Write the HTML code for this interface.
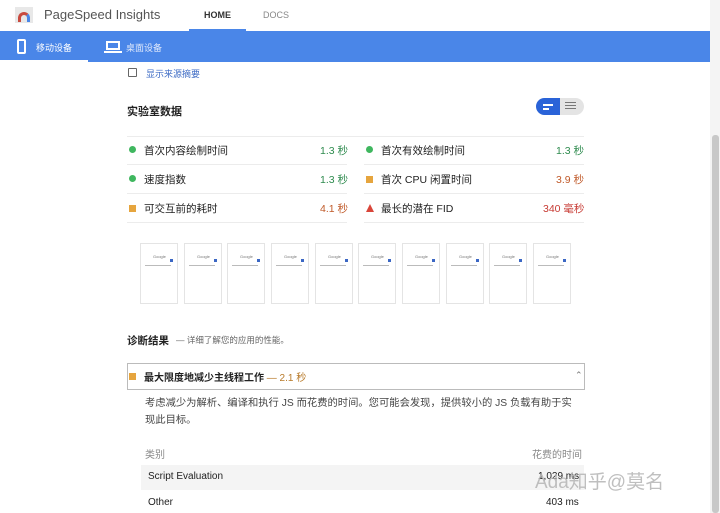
<!DOCTYPE html><html><head><meta charset="utf-8"><style>
*{margin:0;padding:0;box-sizing:border-box}
body{width:720px;height:513px;overflow:hidden;background:#fff;font-family:"Liberation Sans","Noto Sans CJK SC",sans-serif;position:relative;color:#212121}
.a{position:absolute;white-space:nowrap}
.sep{position:absolute;height:1px;background:#ececec}
.fr{position:absolute;top:243px;width:38px;height:61px;border:1px solid #e4e4e4;background:#fff}
.fr i{position:absolute;font-style:normal;font-size:4px;color:#777;left:12px;top:10px}
.fr b{position:absolute;left:4px;top:21px;width:26px;height:1px;background:#bbb}
.fr s{position:absolute;right:4px;top:15px;width:3px;height:3px;background:#3b67c4}
</style></head><body>
<div class="a" style="left:15px;top:7px;width:18px;height:16px;background:#e8e8e8"></div>
<div class="a" style="left:18px;top:12px;width:12px;height:10px;border:3px solid #c94a3f;border-bottom:none;border-radius:7px 7px 0 0;border-right-color:#4a86e8"></div>
<div class="a" style="left:44px;top:7px;font-size:13px;color:#555">PageSpeed Insights</div>
<div class="a" style="left:204px;top:10px;font-size:9px;font-weight:bold;color:#333">HOME</div>
<div class="a" style="left:263px;top:10px;font-size:9px;color:#888">DOCS</div>
<div class="a" style="left:189px;top:29px;width:57px;height:2px;background:#4a86e8"></div>
<div class="a" style="left:0;top:31px;width:710px;height:31px;background:#4a86e8"></div>
<div class="a" style="left:0;top:60px;width:88px;height:2px;background:#fff"></div>
<div class="a" style="left:17px;top:39px;width:9px;height:15px;border:2px solid #fff;border-radius:2px"></div>
<div class="a" style="left:36px;top:41px;font-size:9px;color:#fff">移动设备</div>
<div class="a" style="left:106px;top:41px;width:14px;height:9px;border:2px solid #fff"></div>
<div class="a" style="left:104px;top:51px;width:18px;height:2px;background:#fff"></div>
<div class="a" style="left:126px;top:41px;font-size:9px;color:#dfe8fb">桌面设备</div>
<div class="a" style="left:128px;top:68px;width:9px;height:9px;border:1.5px solid #666;border-radius:1px"></div>
<div class="a" style="left:146px;top:67px;font-size:9px;color:#3d6bc4">显示来源摘要</div>
<div class="a" style="left:127px;top:103px;font-size:11px;font-weight:bold">实验室数据</div>
<div class="a" style="left:536px;top:98px;width:48px;height:17px;border-radius:9px;background:#e4e4e4;overflow:hidden"><div style="width:24px;height:17px;background:#2a63d8"></div></div>
<div class="a" style="left:543px;top:104px;width:10px;height:2px;background:#fff"></div>
<div class="a" style="left:543px;top:108px;width:6px;height:2px;background:#fff"></div>
<div class="a" style="left:565px;top:102px;width:11px;height:1px;background:#777;box-shadow:0 3px 0 #777,0 6px 0 #777"></div>
<div class="sep" style="left:127px;top:136px;width:457px"></div>
<div class="sep" style="left:127px;top:164px;width:220px"></div><div class="sep" style="left:364px;top:164px;width:220px"></div>
<div class="sep" style="left:127px;top:193px;width:220px"></div><div class="sep" style="left:364px;top:193px;width:220px"></div>
<div class="sep" style="left:127px;top:222px;width:220px"></div><div class="sep" style="left:364px;top:222px;width:220px"></div>
<div class="a" style="left:129px;top:146px;width:7px;height:7px;border-radius:50%;background:#3fb75f"></div>
<div class="a" style="left:144px;top:143px;font-size:10.5px">首次内容绘制时间</div>
<div class="a" style="left:320px;top:143px;font-size:10.5px;color:#2e8b4e">1.3 秒</div>
<div class="a" style="left:129px;top:175px;width:7px;height:7px;border-radius:50%;background:#3fb75f"></div>
<div class="a" style="left:144px;top:172px;font-size:10.5px">速度指数</div>
<div class="a" style="left:320px;top:172px;font-size:10.5px;color:#2e8b4e">1.3 秒</div>
<div class="a" style="left:129px;top:205px;width:7px;height:7px;background:#e6a53e"></div>
<div class="a" style="left:144px;top:201px;font-size:10.5px">可交互前的耗时</div>
<div class="a" style="left:320px;top:201px;font-size:10.5px;color:#c05a2a">4.1 秒</div>
<div class="a" style="left:366px;top:146px;width:7px;height:7px;border-radius:50%;background:#3fb75f"></div>
<div class="a" style="left:381px;top:143px;font-size:10.5px">首次有效绘制时间</div>
<div class="a" style="left:556px;top:143px;font-size:10.5px;color:#2e8b4e">1.3 秒</div>
<div class="a" style="left:366px;top:176px;width:7px;height:7px;background:#e6a53e"></div>
<div class="a" style="left:381px;top:172px;font-size:10.5px">首次 CPU 闲置时间</div>
<div class="a" style="left:556px;top:172px;font-size:10.5px;color:#c05a2a">3.9 秒</div>
<div class="a" style="left:366px;top:204px;width:0;height:0;border-left:4px solid transparent;border-right:4px solid transparent;border-bottom:8px solid #d9463a"></div>
<div class="a" style="left:381px;top:201px;font-size:10.5px">最长的潜在 FID</div>
<div class="a" style="left:543px;top:201px;font-size:10.5px;color:#c73a33">340 毫秒</div>
<div class="fr" style="left:140px"><i>Google</i><s></s><b></b></div>
<div class="fr" style="left:184px"><i>Google</i><s></s><b></b></div>
<div class="fr" style="left:227px"><i>Google</i><s></s><b></b></div>
<div class="fr" style="left:271px"><i>Google</i><s></s><b></b></div>
<div class="fr" style="left:315px"><i>Google</i><s></s><b></b></div>
<div class="fr" style="left:358px"><i>Google</i><s></s><b></b></div>
<div class="fr" style="left:402px"><i>Google</i><s></s><b></b></div>
<div class="fr" style="left:446px"><i>Google</i><s></s><b></b></div>
<div class="fr" style="left:489px"><i>Google</i><s></s><b></b></div>
<div class="fr" style="left:533px"><i>Google</i><s></s><b></b></div>
<div class="a" style="left:127px;top:333px;font-size:10.5px;font-weight:bold">诊断结果</div>
<div class="a" style="left:176px;top:334px;font-size:8.5px;color:#666">— 详细了解您的应用的性能。</div>
<div class="a" style="left:127px;top:363px;width:458px;height:27px;border:1px solid #bbb"></div>
<div class="a" style="left:129px;top:373px;width:7px;height:7px;background:#e6a53e"></div>
<div class="a" style="left:144px;top:369px;font-size:10px;font-weight:bold">最大限度地减少主线程工作 <span style="color:#b87a2a;font-weight:normal">— 2.1 秒</span></div>
<div class="a" style="left:575px;top:370px;font-size:9px;color:#777">⌃</div>
<div class="a" style="left:145px;top:395px;font-size:10.3px;color:#444;line-height:17px">考虑减少为解析、编译和执行 JS 而花费的时间。您可能会发现，提供较小的 JS 负载有助于实<br>现此目标。</div>
<div class="a" style="left:145px;top:446px;font-size:10px;color:#888">类别</div>
<div class="a" style="left:532px;top:446px;font-size:10px;color:#888">花费的时间</div>
<div class="a" style="left:141px;top:465px;width:443px;height:25px;background:#f4f4f4"></div>
<div class="a" style="left:148px;top:471px;font-size:10px">Script Evaluation</div>
<div class="a" style="left:538px;top:471px;font-size:10px">1,029 ms</div>
<div class="a" style="left:148px;top:497px;font-size:10px">Other</div>
<div class="a" style="left:546px;top:497px;font-size:10px">403 ms</div>
<div class="a" style="left:535px;top:467px;font-size:19px;color:rgba(180,180,180,.85)">Ada知乎@莫名</div>
<div class="a" style="left:710px;top:0;width:10px;height:513px;background:#f4f4f4"></div>
<div class="a" style="left:712px;top:135px;width:7px;height:378px;background:#c8c8c8;border-radius:3px"></div>
</body></html>
